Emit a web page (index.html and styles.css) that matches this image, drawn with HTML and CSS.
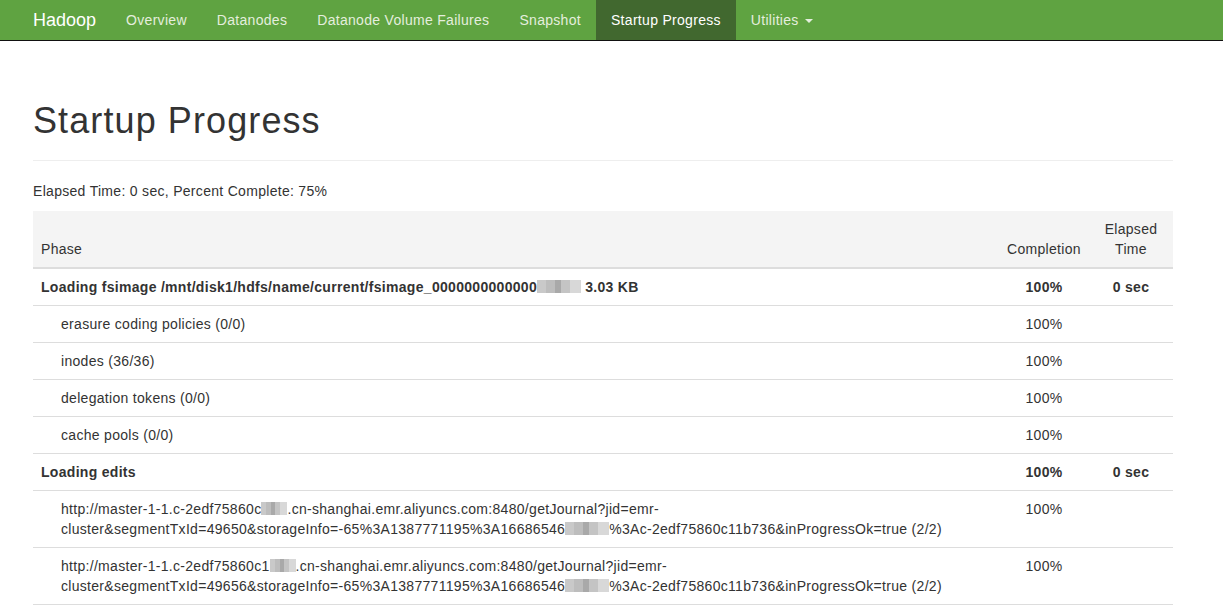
FILE: index.html
```html
<!DOCTYPE html>
<html>
<head>
<meta charset="utf-8">
<title>Startup Progress</title>
<link rel="stylesheet" href="styles.css">
</head>
<body>
<header class="navbar">
  <div class="container nav-inner">
    <a class="brand" href="#">Hadoop</a>
    <ul class="nav">
      <li><a href="#">Overview</a></li>
      <li><a href="#">Datanodes</a></li>
      <li><a href="#">Datanode Volume Failures</a></li>
      <li><a href="#">Snapshot</a></li>
      <li class="active"><a href="#">Startup Progress</a></li>
      <li><a href="#">Utilities <span class="caret"></span></a></li>
    </ul>
  </div>
</header>
<main class="container main">
  <div class="page-header"><h1>Startup Progress</h1></div>
  <p class="summary">Elapsed Time: 0 sec, Percent Complete: 75%</p>
  <table class="table">
    <thead>
      <tr>
        <th class="phase">Phase</th>
        <th class="center col-completion">Completion</th>
        <th class="center col-elapsed">Elapsed Time</th>
      </tr>
    </thead>
    <tbody>
      <tr class="major">
        <td>Loading fsimage /mnt/disk1/hdfs/name/current/fsimage_0000000000000<span class="blur b44"></span> 3.03 KB</td>
        <td class="center">100%</td>
        <td class="center">0 sec</td>
      </tr>
      <tr><td class="step">erasure coding policies (0/0)</td><td class="center">100%</td><td></td></tr>
      <tr><td class="step">inodes (36/36)</td><td class="center">100%</td><td></td></tr>
      <tr><td class="step">delegation tokens (0/0)</td><td class="center">100%</td><td></td></tr>
      <tr><td class="step">cache pools (0/0)</td><td class="center">100%</td><td></td></tr>
      <tr class="major">
        <td>Loading edits</td>
        <td class="center">100%</td>
        <td class="center">0 sec</td>
      </tr>
      <tr>
        <td class="step">http://master-1-1.c-2edf75860c<span class="blur b26"></span>.cn-shanghai.emr.aliyuncs.com:8480/getJournal?jid=emr-cluster&amp;segmentTxId=49650&amp;storageInfo=-65%3A1387771195%3A16686546<span class="blur b44"></span>%3Ac-2edf75860c11b736&amp;inProgressOk=true (2/2)</td>
        <td class="center">100%</td><td></td>
      </tr>
      <tr>
        <td class="step">http://master-1-1.c-2edf75860c1<span class="blur b26"></span>.cn-shanghai.emr.aliyuncs.com:8480/getJournal?jid=emr-cluster&amp;segmentTxId=49656&amp;storageInfo=-65%3A1387771195%3A16686546<span class="blur b44"></span>%3Ac-2edf75860c11b736&amp;inProgressOk=true (2/2)</td>
        <td class="center">100%</td><td></td>
      </tr>
    </tbody>
  </table>
</main>
</body>
</html>
```

FILE: styles.css
```css
* { box-sizing: border-box; }
html, body { margin: 0; padding: 0; }
body {
  font-family: "Liberation Sans", Arial, Helvetica, sans-serif;
  font-size: 14px;
  line-height: 20px;
  letter-spacing: 0.3px;
  color: #333;
  background: #fff;
}
a { text-decoration: none; }
.container {
  width: 1170px;
  padding: 0 15px;
  margin-left: 18px;
}
.main { padding-top: 20px; }
.navbar {
  background: #5fa341;
  border-bottom: 1px solid #111;
  height: 41px;
}
.nav-inner {
  display: flex;
  align-items: stretch;
  height: 40px;
}
.brand {
  color: #fff;
  font-size: 18px;
  line-height: 20px;
  letter-spacing: 0;
  padding: 10px 15px;
  margin-left: -15px;
  height: 40px;
}
.nav {
  list-style: none;
  display: flex;
  margin: 0;
  padding: 0;
}
.nav li a {
  display: block;
  padding: 10px 15px;
  height: 40px;
  line-height: 20px;
  color: #e4eedd;
}
.nav li.active a {
  background: #41682f;
  color: #fff;
}
.caret {
  display: inline-block;
  width: 0;
  height: 0;
  margin-left: 2px;
  vertical-align: middle;
  border-top: 4px solid #e4eedd;
  border-left: 4px solid transparent;
  border-right: 4px solid transparent;
}
.page-header {
  margin: 40px 0 20px;
  padding-bottom: 9px;
  border-bottom: 1px solid #eee;
}
.page-header h1 {
  margin: 20px 0 10px;
  font-size: 36px;
  line-height: 39.6px;
  letter-spacing: 1.1px;
  font-weight: 500;
  color: #333;
}
.summary {
  margin: 0 0 10px;
}
.table {
  width: 100%;
  border-collapse: collapse;
  border-spacing: 0;
}
.table th, .table td {
  padding: 8px;
  line-height: 20px;
  vertical-align: bottom;
  text-align: left;
}
.table thead tr { background: #f4f4f4; }
.table thead th {
  border-bottom: 2px solid #ddd;
  font-weight: normal;
}
.table tbody td {
  vertical-align: top;
  border-bottom: 1px solid #ddd;
}
.table .center { text-align: center; }
.col-completion { width: 90px; white-space: nowrap; }
.col-elapsed { width: 84px; }
.table tbody td.step { padding-left: 28px; }
.major td { font-weight: bold; }
.blur {
  display: inline-block;
  height: 13px;
  vertical-align: -1px;
  background: linear-gradient(90deg, #c9c9c9 0 20%, #bdbdbd 20% 40%, #a9a9a9 40% 55%, #c4c4c4 55% 75%, #d8d8d8 75% 100%);
}
.b44 { width: 44px; }
.b26 { width: 26px; }
```
